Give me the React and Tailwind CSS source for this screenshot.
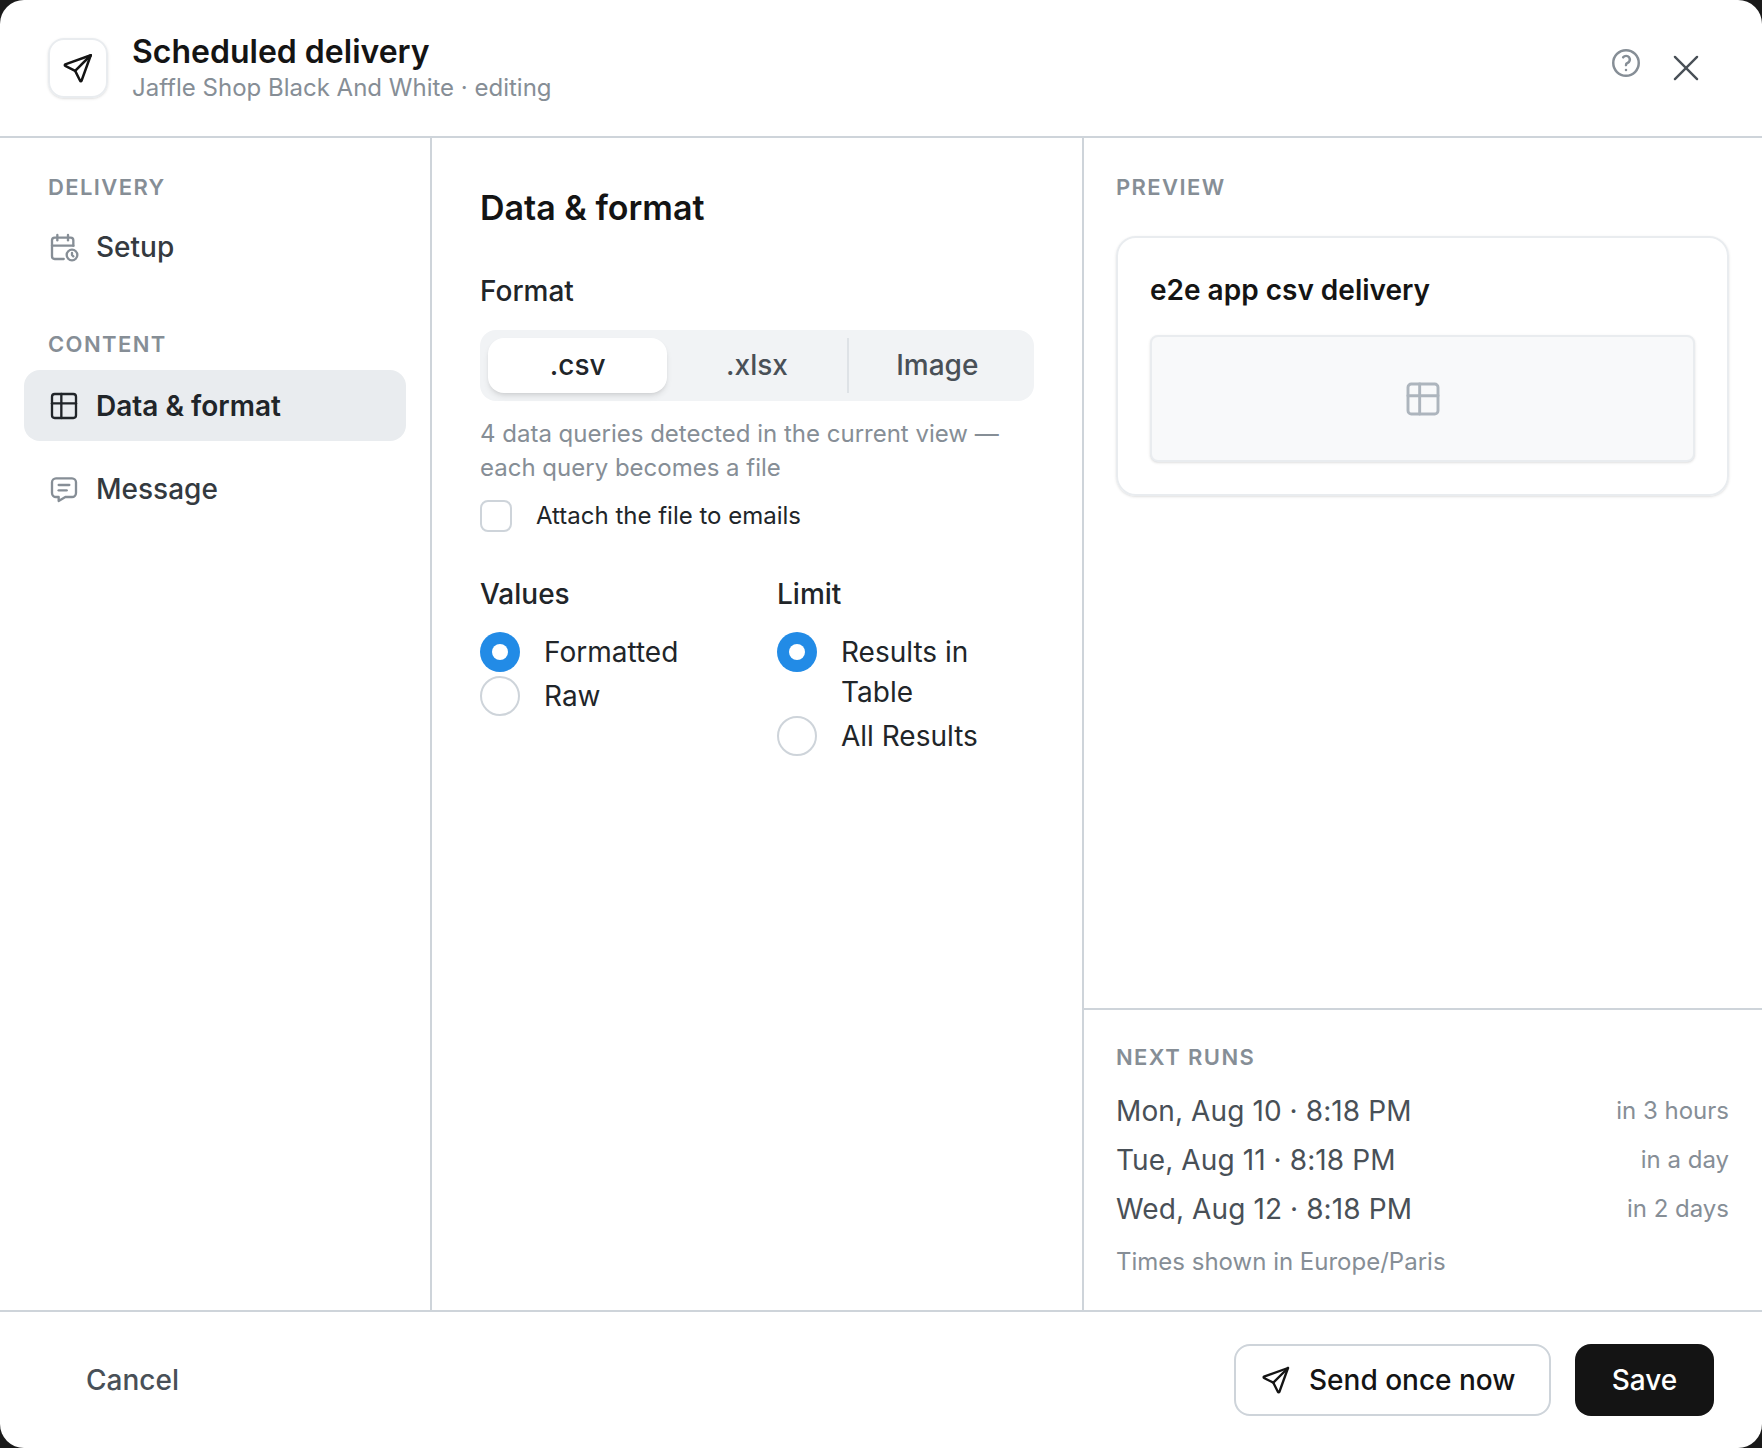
const Icon = ({ size = 24, stroke = 2, className = "", children }) => (
  <svg width={size} height={size} viewBox="0 0 24 24" fill="none" stroke="currentColor" strokeWidth={stroke} strokeLinecap="round" strokeLinejoin="round" className={className}>
    {children}
  </svg>
);

const SendIcon = (p) => (
  <Icon {...p}>
    <path d="M10 14l11 -11" />
    <path d="M21 3l-6.5 18a.55 .55 0 0 1 -1 0l-3.5 -7l-7 -3.5a.55 .55 0 0 1 0 -1l18 -6.5" />
  </Icon>
);
const TableIcon = (p) => (
  <Icon {...p}>
    <path d="M3 5a2 2 0 0 1 2 -2h14a2 2 0 0 1 2 2v14a2 2 0 0 1 -2 2h-14a2 2 0 0 1 -2 -2v-14z" />
    <path d="M3 10h18" />
    <path d="M10 3v18" />
  </Icon>
);
const CalendarIcon = (p) => (
  <Icon {...p}>
    <path d="M11.795 21h-6.795a2 2 0 0 1 -2 -2v-12a2 2 0 0 1 2 -2h12a2 2 0 0 1 2 2v4" />
    <path d="M18 18m-4 0a4 4 0 1 0 8 0a4 4 0 1 0 -8 0" />
    <path d="M15 3v4" />
    <path d="M7 3v4" />
    <path d="M3 11h16" />
    <path d="M18 16.496v1.504l1 1" />
  </Icon>
);
const MessageIcon = (p) => (
  <Icon {...p}>
    <path d="M8 9h8" />
    <path d="M8 13h6" />
    <path d="M18 4a3 3 0 0 1 3 3v8a3 3 0 0 1 -3 3h-5l-5 3v-3h-2a3 3 0 0 1 -3 -3v-8a3 3 0 0 1 3 -3h12z" />
  </Icon>
);
const HelpIcon = (p) => (
  <Icon {...p}>
    <path d="M12 12m-9 0a9 9 0 1 0 18 0a9 9 0 1 0 -18 0" />
    <path d="M12 17l0 .01" />
    <path d="M12 13.5a1.5 1.5 0 0 1 1 -1.5a2.6 2.6 0 1 0 -3 -4" />
  </Icon>
);

const SectionLabel = ({ children, className = "" }) => (
  <p className={`text-[22px] leading-8 font-semibold tracking-[1.4px] text-[#868e96] ${className}`}>{children}</p>
);

function Radio({ checked, label }) {
  return (
    <div className="flex gap-6">
      {checked ? (
        <span className="w-10 h-10 shrink-0 rounded-full bg-[#228be6] flex items-center justify-center">
          <span className="w-4 h-4 rounded-full bg-white" />
        </span>
      ) : (
        <span className="w-10 h-10 shrink-0 rounded-full border-2 border-[#ced4da] bg-white" />
      )}
      <span className="text-[28px] leading-10 text-[#212529]">{label}</span>
    </div>
  );
}

const RUNS = [
  { date: "Mon, Aug 10 · 8:18 PM", rel: "in 3 hours" },
  { date: "Tue, Aug 11 · 8:18 PM", rel: "in a day" },
  { date: "Wed, Aug 12 · 8:18 PM", rel: "in 2 days" },
];

export default function App() {
  return (
    <div className="h-screen bg-[#1a1a1a] font-['Inter',sans-serif]">
      <div className="h-full bg-white rounded-[24px] flex flex-col overflow-hidden">
        <header className="h-[138px] shrink-0 border-b-2 border-[#ced4da] flex items-center pl-12 pr-[57px]">
          <div className="w-[60px] h-[60px] rounded-2xl border-2 border-[#e9ecef] shadow-sm flex items-center justify-center text-[#141414]">
            <SendIcon size={34} stroke={1.75} />
          </div>
          <div className="ml-6">
            <p className="text-[32px] leading-10 font-semibold text-[#141414]">Scheduled delivery</p>
            <p className="text-[24px] leading-8 text-[#868e96]">Jaffle Shop Black And White · editing</p>
          </div>
          <div className="ml-auto flex items-center gap-[24px]">
            <HelpIcon size={34} stroke={1.75} className="text-[#868e96] mb-[10px]" />
            <Icon size={38} stroke={1.5} className="text-[#495057]">
              <path d="M5 5l14 14" />
              <path d="M19 5l-14 14" />
            </Icon>
          </div>
        </header>

        <div className="flex-1 flex min-h-0">
          <aside className="w-[432px] shrink-0 border-r-2 border-[#ced4da] pt-[33px] px-6">
            <SectionLabel className="px-6">DELIVERY</SectionLabel>
            <div className="mt-2 h-[71px] flex items-center gap-4 px-6 text-[#343a40]">
              <CalendarIcon size={32} stroke={1.75} className="text-[#868e96]" />
              <span className="text-[28px] font-medium">Setup</span>
            </div>
            <SectionLabel className="px-6 mt-[46px]">CONTENT</SectionLabel>
            <div className="mt-[10px] h-[71px] flex items-center gap-4 px-6 rounded-2xl bg-[#e9ecef] text-[#212529]">
              <TableIcon size={32} stroke={1.75} />
              <span className="text-[28px] font-semibold">Data &amp; format</span>
            </div>
            <div className="mt-3 h-[71px] flex items-center gap-4 px-6 text-[#343a40]">
              <MessageIcon size={32} stroke={1.75} className="text-[#868e96]" />
              <span className="text-[28px] font-medium">Message</span>
            </div>
          </aside>

          <main className="w-[652px] shrink-0 border-r-2 border-[#ced4da] pt-12 px-12">
            <h2 className="text-[34px] leading-[44px] font-semibold text-[#141414]">Data &amp; format</h2>
            <p className="mt-[43px] text-[28px] leading-9 font-medium text-[#212529]">Format</p>
            <div className="mt-[21px] h-[71px] rounded-2xl bg-[#f1f3f5] p-2 grid grid-cols-3 text-[28px]">
              <div className="rounded-2xl bg-white shadow-md flex items-center justify-center pb-px font-medium text-[#212529]">.csv</div>
              <div className="flex items-center justify-center pb-px font-medium text-[#495057]">.xlsx</div>
              <div className="flex items-center justify-center pb-px font-medium text-[#495057] border-l-2 border-[#dee2e6]">Image</div>
            </div>
            <p className="mt-[16px] text-[24px] leading-[34px] text-[#868e96]">
              4 data queries detected in the current view — each query becomes a file
            </p>
            <label className="mt-[15px] flex items-center gap-6">
              <span className="w-8 h-8 rounded-lg border-2 border-[#ced4da] bg-white" />
              <span className="text-[24px] leading-8 text-[#212529]">Attach the file to emails</span>
            </label>
            <div className="mt-[44px] grid grid-cols-2 gap-10">
              <div>
                <p className="text-[28px] leading-9 font-medium text-[#212529]">Values</p>
                <div className="mt-5 flex flex-col gap-1">
                  <Radio checked label="Formatted" />
                  <Radio label="Raw" />
                </div>
              </div>
              <div>
                <p className="text-[28px] leading-9 font-medium text-[#212529]">Limit</p>
                <div className="mt-5 flex flex-col gap-1">
                  <Radio checked label="Results in Table" />
                  <Radio label="All Results" />
                </div>
              </div>
            </div>
          </main>

          <section className="flex-1 flex flex-col min-w-0">
            <div className="flex-1 pt-[33px] pl-8 pr-[33px]">
              <SectionLabel>PREVIEW</SectionLabel>
              <div className="mt-[33px] rounded-[20px] border-2 border-[#e9ecef] shadow-sm p-8">
                <p className="text-[28px] leading-10 font-semibold text-[#141414]">e2e app csv delivery</p>
                <div className="mt-[25px] h-[127px] rounded-lg border-2 border-[#e9ecef] bg-[#f8f9fa] shadow-sm flex items-center justify-center text-[#adb5bd]">
                  <TableIcon size={40} stroke={1.75} />
                </div>
              </div>
            </div>
            <div className="border-t-2 border-[#ced4da] pt-[31px] pb-8 pl-8 pr-[33px]">
              <SectionLabel>NEXT RUNS</SectionLabel>
              <div className="mt-[13px] flex flex-col">
                {RUNS.map((r) => (
                  <div key={r.date} className="h-[49px] flex items-center justify-between">
                    <span className="text-[28px] tracking-[0.1px] text-[#495057]">{r.date}</span>
                    <span className="text-[24px] text-[#868e96]">{r.rel}</span>
                  </div>
                ))}
              </div>
              <p className="mt-[13px] text-[24px] leading-8 text-[#868e96]">Times shown in Europe/Paris</p>
            </div>
          </section>
        </div>

        <footer className="h-[138px] shrink-0 border-t-2 border-[#ced4da] flex items-center pl-[86px] pr-12">
          <span className="text-[28px] font-medium text-[#495057]">Cancel</span>
          <button className="ml-auto h-[72px] w-[317px] rounded-2xl border-2 border-[#ced4da] bg-white flex items-center gap-[17px] pl-[24px] text-[28px] font-medium text-[#141414]">
            <SendIcon size={32} stroke={1.75} />
            Send once now
          </button>
          <button className="ml-6 h-[72px] w-[139px] rounded-2xl bg-[#141414] text-white text-[28px] font-medium">Save</button>
        </footer>
      </div>
    </div>
  );
}
